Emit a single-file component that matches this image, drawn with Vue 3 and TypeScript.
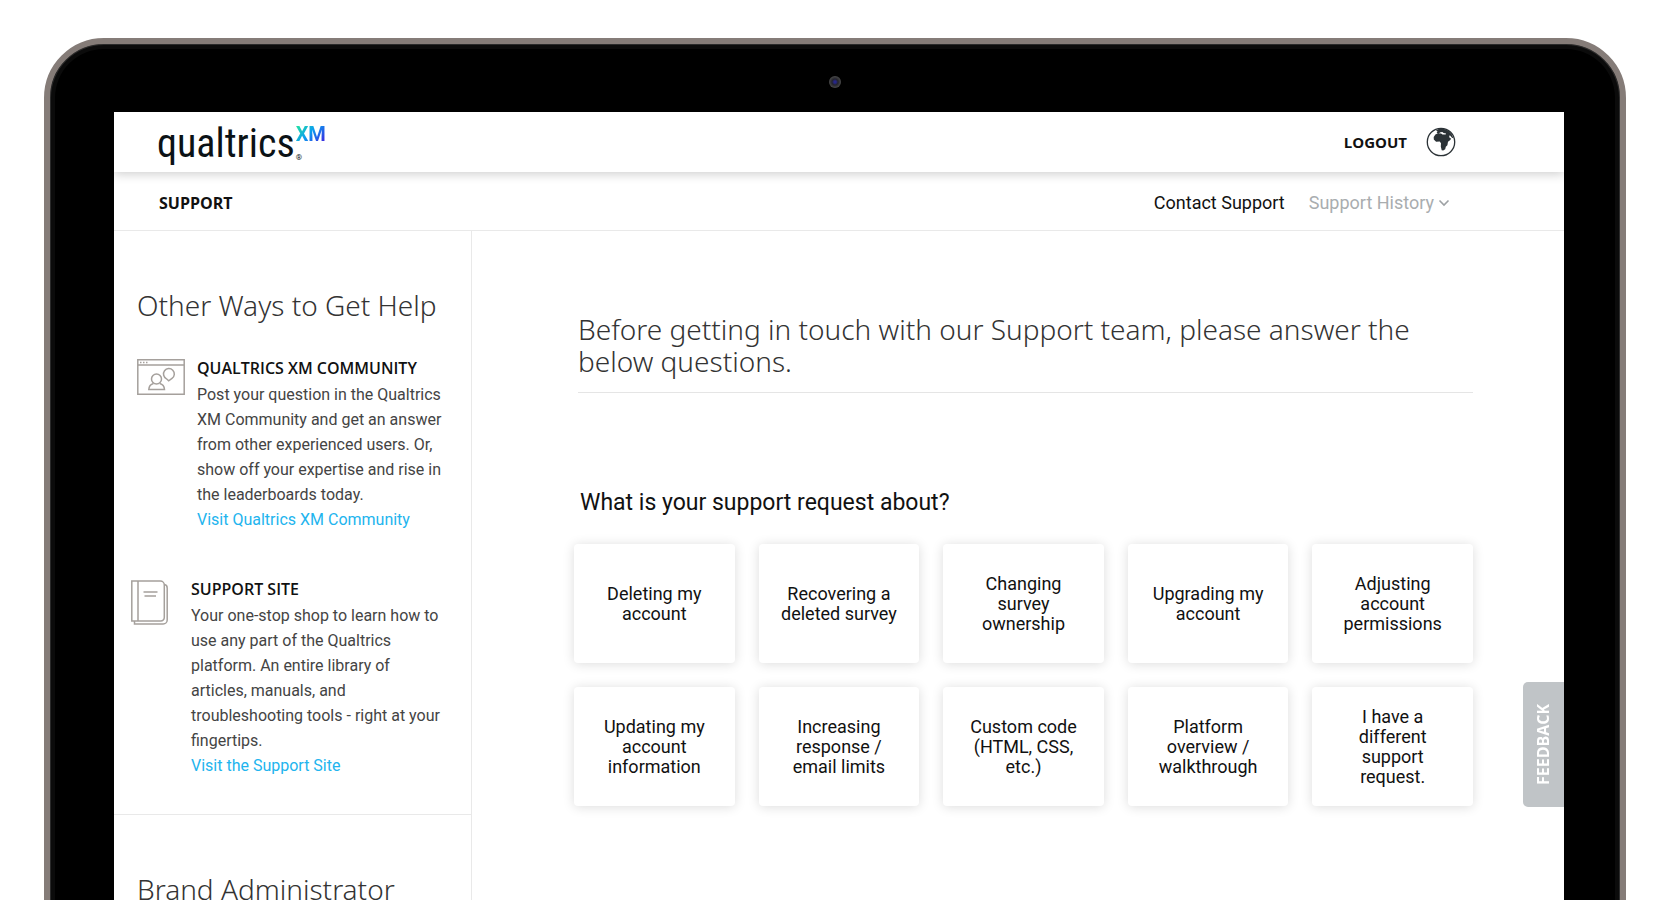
<script setup lang="ts">
interface HelpItem {
  id: string
  title: string
  text: string
  link: string
}

const helpItems: HelpItem[] = [
  {
    id: 'community',
    title: 'QUALTRICS XM COMMUNITY',
    text: 'Post your question in the Qualtrics XM Community and get an answer from other experienced users. Or, show off your expertise and rise in the leaderboards today.',
    link: 'Visit Qualtrics XM Community',
  },
  {
    id: 'site',
    title: 'SUPPORT SITE',
    text: 'Your one-stop shop to learn how to use any part of the Qualtrics platform. An entire library of articles, manuals, and troubleshooting tools - right at your fingertips.',
    link: 'Visit the Support Site',
  },
]

const topics: string[] = [
  'Deleting my account',
  'Recovering a deleted survey',
  'Changing survey ownership',
  'Upgrading my account',
  'Adjusting account permissions',
  'Updating my account information',
  'Increasing response / email limits',
  'Custom code (HTML, CSS, etc.)',
  'Platform overview / walkthrough',
  'I have a different support request.',
]
</script>

<template>
  <div class="stage">
    <div class="laptop">
      <span class="camera"></span>
      <div class="screen">
        <header class="topbar">
          <a class="logo" href="#" aria-label="Qualtrics XM">
            <span class="word">qualtrics</span><span class="marks"><span class="xm">XM</span><span class="reg">®</span></span>
          </a>
          <div class="account">
            <button class="logout" type="button">LOGOUT</button>
            <button class="globe" type="button" aria-label="Language">
              <svg viewBox="0 0 30 30" width="30" height="30">
                <circle cx="15" cy="15" r="13.7" fill="#fff" stroke="#2b3236" stroke-width="1.3" />
                <path fill="#2b3236" d="M10 3.400 13 1.800l4.600-.1 4.800 2 3.300 3.600 1.800 4-1.500-.6-1.900-2.300-1 .4.600 2.300 1.500.3-.9 1.700-2.300 1.700-.6 3.500-1.600 1.500-.6 2.500-2 1.300-1.500-.4-.9-3.800.2-3.200-1.300-1.600-3.600.1-2.300-2.100-.1-2.500 1.700-2.700 2.500-1.100 3.200.1 1.400 1.200 3.100-.1.500-1-2.500-.4-1.300-1.100-1.800.3-1.700.9-2.200-.2.900-1.400Z" />
              </svg>
            </button>
          </div>
        </header>

        <nav class="subnav">
          <a class="section" href="#">SUPPORT</a>
          <div class="links">
            <a href="#">Contact Support</a>
            <button class="history" type="button">
              Support History
              <svg viewBox="0 0 12 8" width="12" height="8"><path d="M1.500 1.500 6 6l4.500-4.500" fill="none" stroke="#9da1a4" stroke-width="1.600" /></svg>
            </button>
          </div>
        </nav>

        <div class="body">
          <aside class="sidebar">
            <section class="help">
              <h2>Other Ways to Get Help</h2>
              <article v-for="item in helpItems" :key="item.id" class="item" :class="item.id">
                <svg v-if="item.id === 'community'" class="icon" viewBox="0 0 48 36" width="48" height="36" fill="none" stroke="#a5a09c" stroke-width="1.500">
                  <path d="M.8.8h46.400v34.400H.8ZM.8 6h46.400" />
                  <path d="M3 3.400h1.500M6 3.400h1.500M9 3.400h1.500" />
                  <circle cx="19.500" cy="20" r="5" />
                  <path d="M16.500 24.500c-3 .8-4.500 2.500-4.700 6h15.700c-.2-3.500-1.700-5.200-4.700-6" />
                  <path d="M29.500 19.800a5.400 5.400 0 1 1 5.500-.4l-3.300 2.400Z" />
                </svg>
                <svg v-else class="icon" viewBox="0 0 37 45" width="37" height="45" fill="none" stroke="#a5a09c" stroke-width="1.500">
                  <path d="M.8 1h28.500a4 4 0 0 1 4 4v32.500a3.500 3.500 0 0 1-3.500 3.500H.8ZM7 1v40" />
                  <path d="M33.300 4.500c2 .3 2.900 1.600 2.900 3.500v32a4 4 0 0 1-4 4H3.500v-3" />
                  <path d="M12.500 12h14M13.500 16h11.500" />
                </svg>
                <div class="copy">
                  <h3>{{ item.title }}</h3>
                  <p>{{ item.text }}</p>
                  <a href="#">{{ item.link }}</a>
                </div>
              </article>
            </section>
            <section class="brand">
              <h2>Brand Administrator</h2>
            </section>
          </aside>

          <main class="main">
            <h1>Before getting in touch with our Support team, please answer the below questions.</h1>
            <h2 class="question">What is your support request about?</h2>
            <div class="topics">
              <button v-for="topic in topics" :key="topic" type="button"><span>{{ topic }}</span></button>
            </div>
          </main>
        </div>

        <button class="feedback" type="button">FEEDBACK</button>
      </div>
    </div>
  </div>
</template>

<style>
body {
  margin: 0;
  background: #fff;
}
</style>

<style scoped>
* {
  box-sizing: border-box;
}

.stage {
  height: 100vh;
  overflow: hidden;
  padding: 38px 42px 0 44px;
  font-family: Roboto, 'Liberation Sans', sans-serif;
  color: #111;
}

button {
  font: inherit;
  color: inherit;
  background: none;
  border: 0;
  padding: 0;
  cursor: pointer;
}

a {
  color: inherit;
  text-decoration: none;
}

h1,
h2,
h3,
p {
  margin: 0;
}

.laptop {
  position: relative;
  height: calc(100vh + 60px);
  padding: 68px 56px 0 64px;
  background: #000;
  border: 6px solid #857c78;
  border-radius: 60px;
  box-shadow: inset 0 0 0 1px #2a2a2a, inset 0 0 0 5px #0b0b0b;
}

.camera {
  position: absolute;
  top: 32px;
  left: 50%;
  width: 12px;
  height: 12px;
  margin-left: -6px;
  border-radius: 50%;
  background: radial-gradient(circle, #26268a 0 1px, #24242c 3px, #4a4a4a 6px);
}

.screen {
  position: relative;
  display: flex;
  flex-direction: column;
  height: 100%;
  background: #fff;
}

.topbar {
  position: relative;
  display: flex;
  align-items: center;
  justify-content: space-between;
  height: 60px;
  padding: 0 108px 0 43px;
  box-shadow: 0 2px 10px rgba(0, 0, 0, 0.2);
  clip-path: inset(0 0 -20px 0);
}

.logo {
  display: flex;
  color: #0b1216;
}

.word {
  padding-top: 4px;
  font: 400 40px/60px 'Roboto Condensed', Roboto, sans-serif;
}

.marks {
  display: flex;
  flex-direction: column;
  justify-content: space-between;
  padding: 14px 0 12px 1px;
}

.xm {
  font: 700 20px/20px Roboto, sans-serif;
  color: transparent;
  background: linear-gradient(135deg, #21dbaa 10%, #0a9df0 45%, #3a2be0 90%);
  background-clip: text;
}

.reg {
  font-size: 8px;
  line-height: 8px;
}

.account {
  display: flex;
  align-items: center;
  gap: 19px;
}

.logout {
  font: 700 15px/20px 'Open Sans', sans-serif;
}

.globe svg {
  display: block;
}

.subnav {
  display: flex;
  align-items: center;
  justify-content: space-between;
  height: 59px;
  padding: 4px 114px 0 45px;
  border-bottom: 1px solid #e9e9e9;
}

.section {
  font: 700 16px/24px 'Open Sans', sans-serif;
}

.links {
  display: flex;
  gap: 24px;
  font-size: 18px;
  line-height: 24px;
}

.history {
  display: flex;
  align-items: center;
  gap: 4px;
  color: #a9adaf;
}

.body {
  flex: 1;
  display: flex;
}

.sidebar {
  flex: 0 0 358px;
  border-right: 1px solid #e9e9e9;
}

.sidebar h2,
h1 {
  font-family: 'Noto Sans', sans-serif;
  font-weight: 300;
  font-size: 28px;
  line-height: 32px;
  color: #333;
}

.help {
  padding: 58px 24px 36px 17px;
  border-bottom: 1px solid #e9e9e9;
}

.help h2,
.brand h2 {
  padding-left: 6px;
}

.brand {
  padding: 58px 0 0 17px;
}

.item {
  display: flex;
}

.icon {
  flex: none;
}

.community {
  padding: 33px 0 0 6px;
  gap: 12px;
}

.community .icon,
.site .icon {
  margin-top: 5px;
}

.site {
  padding-top: 43px;
  gap: 23px;
}

.copy {
  font-size: 16px;
  line-height: 25px;
  color: #444;
}

.copy h3 {
  font: 600 16px/28px 'Open Sans', sans-serif;
  color: #111;
  white-space: nowrap;
}

.copy a {
  color: #22b4ee;
}

.main {
  flex: 1;
  padding: 82px 91px 0 102px;
}

h1 {
  margin-left: 4px;
  padding-bottom: 15px;
  border-bottom: 1px solid #e5e5e5;
}

.question {
  margin: 96px 0 0 6px;
  font-size: 23px;
  font-weight: 400;
  line-height: 28px;
}

.topics {
  display: grid;
  grid-template-columns: repeat(5, 1fr);
  grid-auto-rows: 119px;
  gap: 24px;
  margin-top: 27px;
}

.topics button {
  padding: 0 20px;
  font-size: 18px;
  line-height: 20px;
  border-radius: 4px;
  background: #fff;
  box-shadow: 0 1px 12px rgba(0, 0, 0, 0.14);
}

.feedback {
  position: absolute;
  right: 0;
  top: 570px;
  width: 41px;
  height: 125px;
  writing-mode: vertical-rl;
  transform: rotate(180deg);
  border-radius: 0 5px 5px 0;
  background: #c0c4c7;
  color: #fff;
  font: 700 16px/41px 'Open Sans', sans-serif;
  text-align: center;
}
</style>
